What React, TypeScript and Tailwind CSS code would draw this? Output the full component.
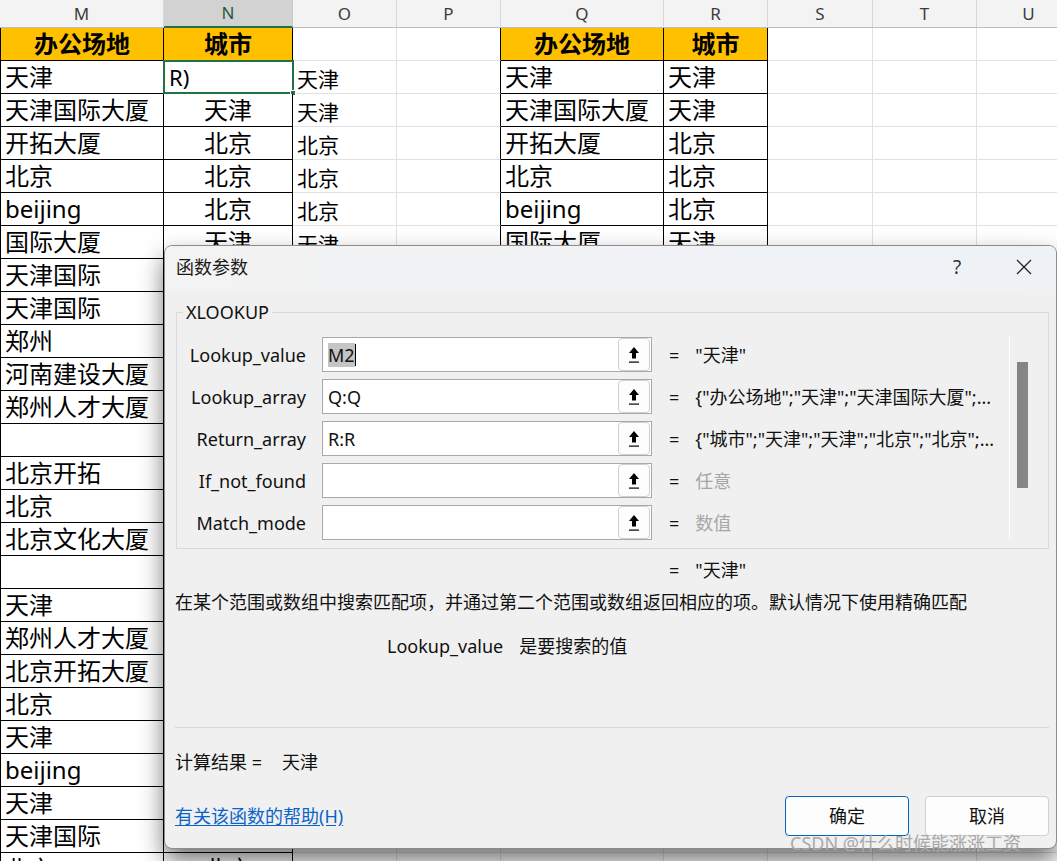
import React from 'react';

const cols = [
  { k: 'M', w: 'w-[164px]' },
  { k: 'N', w: 'w-[129px]' },
  { k: 'O', w: 'w-[104px]' },
  { k: 'P', w: 'w-[104px]' },
  { k: 'Q', w: 'w-[163px]' },
  { k: 'R', w: 'w-[104px]' },
  { k: 'S', w: 'w-[105px]' },
  { k: 'T', w: 'w-[104px]' },
  { k: 'U', w: 'w-[104px]' },
];

const officeList = [
  '天津', '天津国际大厦', '开拓大厦', '北京', 'beijing', '国际大厦', '天津国际', '天津国际', '郑州',
  '河南建设大厦', '郑州人才大厦', '', '北京开拓', '北京', '北京文化大厦', '', '天津', '郑州人才大厦',
  '北京开拓大厦', '北京', '天津', 'beijing', '天津', '天津国际', '北京',
];

const cityList = [
  'R)', '天津', '北京', '北京', '北京', '天津', '天津', '天津', '郑州', '郑州', '郑州', '', '北京', '北京',
  '北京', '', '天津', '郑州', '北京', '北京', '天津', '北京', '天津', '天津', '北京',
];

const resultList = ['天津', '天津', '北京', '北京', '北京', '天津'];

const grid = 'border-[#e1e1e1]';

function Sheet() {
  const rows = Array.from({ length: 26 }, (_, i) => i);
  return (
    <div className="flex flex-col">
      {/* column headers */}
      <div className="flex h-[28px]">
        {cols.map((c) =>
          c.k === 'N' ? (
            <div
              key={c.k}
              className={`${c.w} shrink-0 flex items-center justify-center border-r border-b-2 border-r-[#c8c8c8] border-b-[#217346] bg-[#d2d2d2] text-[17px] text-[#1e5d3a]`}
            >
              {c.k}
            </div>
          ) : (
            <div
              key={c.k}
              className={`${c.w} shrink-0 flex items-center justify-center border-r border-b border-r-[#d6d6d6] border-b-[#bdbdbd] bg-[#f3f3f3] text-[17px] text-[#3c3c3c]`}
            >
              {c.k}
            </div>
          )
        )}
      </div>

      {rows.map((r) => {
        const head = r === 0;
        const office = head ? '办公场地' : officeList[r - 1] ?? '';
        const city = head ? '城市' : cityList[r - 1] ?? '';
        const result = head ? '' : resultList[r - 1] ?? '';
        // the copied lookup table on Q:R is shorter than the source list
        const inCopy = r <= 22;
        return (
          <div key={r} className="flex h-[33px]">
            {/* M */}
            <div
              className={`w-[164px] shrink-0 flex items-center border-l border-r border-b border-black text-[24px] leading-none ${
                head ? 'justify-center bg-[#ffc000] font-bold' : 'pl-[4px] bg-white'
              }`}
            >
              {office}
            </div>
            {/* N */}
            <div
              className={`relative w-[129px] shrink-0 flex items-center border-r border-b border-black leading-none ${
                head ? 'justify-center bg-[#ffc000] font-bold text-[24px]' : r === 1 ? 'pl-[5px] text-[22px] bg-white' : 'justify-center text-[24px] bg-white'
              }`}
            >
              {city}
              {r === 1 && (
                <div className="absolute -left-px -top-px w-[131px] h-[34px] border-2 border-[#217346]">
                  <div className="absolute -right-[4px] -bottom-[4px] w-[6px] h-[6px] bg-[#217346] border border-white" />
                </div>
              )}
            </div>
            {/* O */}
            <div className={`w-[104px] shrink-0 flex items-end pb-[3px] pl-[4px] border-r border-b ${grid} text-[21px] leading-none bg-white`}>
              {result}
            </div>
            {/* P */}
            <div
              className={`w-[104px] shrink-0 border-r border-b border-b-[#e1e1e1] bg-white ${
                inCopy ? 'border-r-black' : 'border-r-[#e1e1e1]'
              }`}
            />
            {/* Q */}
            <div
              className={`w-[163px] shrink-0 flex items-center border-r border-b text-[24px] leading-none ${
                inCopy ? 'border-black' : grid
              } ${head ? 'justify-center bg-[#ffc000] font-bold' : 'pl-[4px] bg-white'}`}
            >
              {inCopy ? office : ''}
            </div>
            {/* R */}
            <div
              className={`w-[104px] shrink-0 flex items-center border-r border-b text-[24px] leading-none ${
                inCopy ? 'border-black' : grid
              } ${head ? 'justify-center bg-[#ffc000] font-bold' : 'pl-[4px] bg-white'}`}
            >
              {!inCopy ? '' : head ? '城市' : r === 1 ? '天津' : city}
            </div>
            <div className={`w-[105px] shrink-0 border-r border-b ${grid} bg-white`} />
            <div className={`w-[104px] shrink-0 border-r border-b ${grid} bg-white`} />
            <div className={`w-[104px] shrink-0 border-r border-b ${grid} bg-white`} />
          </div>
        );
      })}
    </div>
  );
}

function RefIcon() {
  return (
    <svg width="12" height="18" viewBox="0 0 12 18">
      <path d="M6 1 L11 7 H8 V12.5 H4 V7 H1 Z" fill="#000" />
      <rect x="1" y="15.5" width="10" height="1.2" fill="#000" />
    </svg>
  );
}

const args = [
  { label: 'Lookup_value', value: 'M2', result: '"天津"', muted: false },
  { label: 'Lookup_array', value: 'Q:Q', result: '{"办公场地";"天津";"天津国际大厦";...', muted: false },
  { label: 'Return_array', value: 'R:R', result: '{"城市";"天津";"天津";"北京";"北京";...', muted: false },
  { label: 'If_not_found', value: '', result: '任意', muted: true },
  { label: 'Match_mode', value: '', result: '数值', muted: true },
];

function ArgRow({ a, first }: { a: (typeof args)[number]; first: boolean }) {
  return (
    <div className="flex items-center h-[35px]">
      <div className="w-[129px] text-right text-[18px] leading-6 text-[#111]">{a.label}</div>
      <div className="ml-[16px] w-[330px] h-[35px] flex items-center border border-[#a8a8a8] bg-white">
        <div className="flex items-center pl-[5px] text-[18px] leading-6 text-[#111]">
          {first ? (
            <>
              <span className="bg-[#c4c4c4]">{a.value}</span>
              <span className="w-px h-[22px] bg-black" />
            </>
          ) : (
            a.value
          )}
        </div>
        <div className="ml-auto mr-px w-[32px] h-[33px] flex items-center justify-center rounded-[4px] border border-[#d0d0d0] bg-[#fdfdfd]">
          <RefIcon />
        </div>
      </div>
      <span className="ml-[17px] text-[18px] leading-6 text-[#111]">=</span>
      <span className={`ml-[16px] text-[18px] leading-6 whitespace-nowrap ${a.muted ? 'text-[#a6a6a6]' : 'text-[#111]'}`}>
        {a.result}
      </span>
    </div>
  );
}

function Dialog() {
  return (
    <div className="absolute left-[164px] top-[245px] w-[893px] h-[604px] flex flex-col rounded-lg border border-[#8c8c8c] bg-[#f0f0f0] overflow-hidden shadow-[0_12px_24px_rgba(0,0,0,0.55)]">
      {/* title bar */}
      <div className="h-[45px] shrink-0 flex items-center pb-[4px] pl-[11px] bg-gradient-to-r from-[#f3f3f3] to-[#eef2f7]">
        <span className="text-[18px] leading-6 text-[#1a1a1a]">函数参数</span>
        <span className="ml-auto w-[70px] text-center text-[19px] leading-6 text-[#333]">?</span>
        <span className="w-[64px] flex justify-center">
          <svg width="16" height="16" viewBox="0 0 16 16">
            <path d="M1 1 L15 15 M15 1 L1 15" stroke="#222" strokeWidth="1.3" />
          </svg>
        </span>
      </div>

      {/* group box */}
      <div className="relative mt-[21px] ml-[11px] w-[873px] h-[237px] shrink-0 border border-[#dadada] flex">
        <span className="absolute left-[6px] -top-[13px] px-[3px] bg-[#f0f0f0] text-[18px] leading-6 text-[#111]">XLOOKUP</span>
        <div className="w-[833px] pt-[24px] flex flex-col gap-[7px]">
          {args.map((a, i) => (
            <ArgRow key={a.label} a={a} first={i === 0} />
          ))}
        </div>
        <div className="mt-[23px] w-[39px] h-[203px] border-l border-white">
          <div className="mt-[26px] ml-[7px] w-[11px] h-[126px] bg-[#858585]" />
        </div>
      </div>

      {/* overall result */}
      <div className="mt-[9px] flex h-6 items-center pl-[504px] text-[18px] text-[#111]">
        <span>=</span>
        <span className="ml-[16px]">"天津"</span>
      </div>

      <div className="mt-[8px] pl-[10px] text-[18px] leading-6 text-[#111] whitespace-nowrap">
        在某个范围或数组中搜索匹配项，并通过第二个范围或数组返回相应的项。默认情况下使用精确匹配
      </div>

      <div className="mt-[20px] pl-[222px] flex text-[18px] leading-6 text-[#111]">
        <span>Lookup_value</span>
        <span className="ml-[16px]">是要搜索的值</span>
      </div>

      <div className="mt-[69px] ml-[10px] mr-[7px] h-px bg-[#d9d9d9]" />

      <div className="mt-[22px] pl-[10px] flex text-[18px] leading-6 text-[#111]">
        <span>计算结果 =</span>
        <span className="ml-[20px]">天津</span>
      </div>

      <div className="mt-[22px] h-[40px] flex items-center pl-[10px] pr-[7px]">
        <span className="text-[18px] leading-6 text-[#0a64c8] underline underline-offset-2">有关该函数的帮助(H)</span>
        <button className="ml-auto w-[124px] h-[40px] rounded-[4px] border border-[#0067c0] bg-[#fdfdfd] text-[18px] text-[#111]">确定</button>
        <button className="ml-[16px] w-[124px] h-[40px] rounded-[4px] border border-[#d0d0d0] bg-[#fdfdfd] text-[18px] text-[#111]">取消</button>
      </div>
    </div>
  );
}

export default function App() {
  return (
    <div className="relative w-[1057px] h-[861px] overflow-hidden bg-white font-['Noto_Sans','Noto_Sans_CJK_SC',sans-serif] text-black">
      <Sheet />
      <Dialog />
      <div className="absolute left-[790px] top-[831px] text-[18px] leading-6 text-[#a8a8a8] whitespace-nowrap">
        CSDN @什么时候能涨涨工资
      </div>
    </div>
  );
}
